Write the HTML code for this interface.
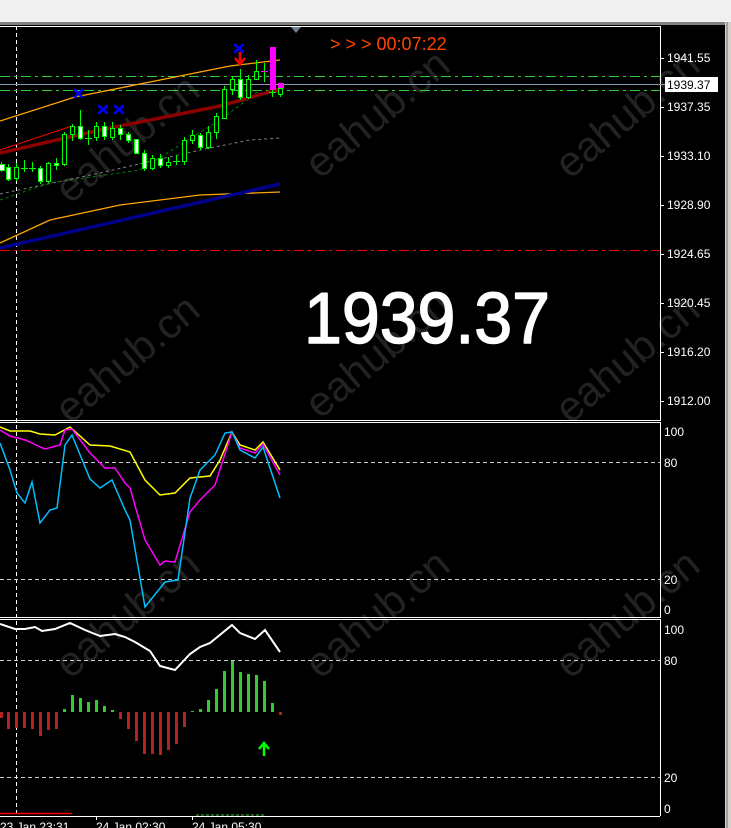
<!DOCTYPE html>
<html><head><meta charset="utf-8"><style>
html,body{margin:0;padding:0;background:#000;}
svg{display:block;}
text{font-family:"Liberation Sans",sans-serif;}
</style></head><body>
<svg width="731" height="828" viewBox="0 0 731 828" xmlns="http://www.w3.org/2000/svg">
<rect width="731" height="828" fill="#000"/>
<rect x="0" y="0" width="731" height="22" fill="#f0f0f0"/>
<rect x="0" y="22" width="731" height="3" fill="#808080"/>
<line x1="0" y1="26.5" x2="660" y2="26.5" stroke="#fff"/>
<polygon points="291,27 301,27 296,33" fill="#708090"/>
<rect x="725" y="22" width="6" height="806" fill="#d4d0c8"/>
<rect x="726" y="22" width="2" height="806" fill="#a0a0a0"/>
<g fill="#222" font-size="42" font-family="Liberation Sans,sans-serif">
<text transform="translate(70,205) rotate(-40)">eahub.cn</text>
<text transform="translate(320,180) rotate(-40)">eahub.cn</text>
<text transform="translate(570,180) rotate(-40)">eahub.cn</text>
<text transform="translate(70,425) rotate(-40)">eahub.cn</text>
<text transform="translate(320,420) rotate(-40)">eahub.cn</text>
<text transform="translate(570,425) rotate(-40)">eahub.cn</text>
<text transform="translate(70,680) rotate(-40)">eahub.cn</text>
<text transform="translate(320,680) rotate(-40)">eahub.cn</text>
<text transform="translate(570,680) rotate(-40)">eahub.cn</text>
</g>
<line x1="660.5" y1="26" x2="660.5" y2="421" stroke="#fff"/>
<line x1="16.5" y1="26" x2="16.5" y2="815" stroke="#fff" stroke-dasharray="4,3"/>
<line x1="0" y1="76.5" x2="660" y2="76.5" stroke="#32cd32" stroke-dasharray="10,4,3,4"/>
<line x1="0" y1="90.5" x2="660" y2="90.5" stroke="#32cd32" stroke-dasharray="10,4,3,4"/>
<line x1="0" y1="84.5" x2="665" y2="84.5" stroke="#8899aa"/>
<line x1="0" y1="250.5" x2="660" y2="250.5" stroke="#ff0000" stroke-dasharray="10,4,3,4"/>
<polyline points="0,121 75,97 150,82 230,66 280,60" fill="none" stroke="#ffa500" stroke-width="1.3"/>
<polyline points="0,194 100,173 200,150 250,140 280,138" fill="none" stroke="#808080" stroke-dasharray="3,3"/>
<polyline points="0,200 50,183 140,170 220,120 260,90" fill="none" stroke="#008000" stroke-dasharray="3,3"/>
<polyline points="0,150 72,126" fill="none" stroke="#ff0000"/>
<polyline points="0,153 100,130 220,106 280,89" fill="none" stroke="#8b0000" stroke-width="3.5"/>
<polyline points="0,243 50,220 120,205 200,195 280,192" fill="none" stroke="#ffa500" stroke-width="1.3"/>
<polyline points="0,248 280,184" fill="none" stroke="#00008b" stroke-width="3.5"/>
<g stroke="#00ff00" stroke-width="1">
<line x1="1.5" y1="162" x2="1.5" y2="172"/><rect x="-1.5" y="164.5" width="6" height="6" fill="#fff"/>
<line x1="8.5" y1="164" x2="8.5" y2="181"/><rect x="6.5" y="167.5" width="4" height="12" fill="#fff"/>
<line x1="16.5" y1="163" x2="16.5" y2="181"/><rect x="14.5" y="167.5" width="4" height="11" fill="#000"/>
<line x1="24.5" y1="160" x2="24.5" y2="172"/><line x1="21" y1="168.5" x2="28" y2="168.5"/>
<line x1="32.5" y1="162" x2="32.5" y2="172"/><line x1="29" y1="168.5" x2="36" y2="168.5"/>
<line x1="40.5" y1="166" x2="40.5" y2="184"/><rect x="38.5" y="168.5" width="4" height="13" fill="#fff"/>
<line x1="48.5" y1="162" x2="48.5" y2="183"/><rect x="46.5" y="163.5" width="4" height="18" fill="#000"/>
<line x1="56.5" y1="158" x2="56.5" y2="170"/><rect x="54.5" y="163.5" width="4" height="2" fill="#fff"/>
<line x1="64.5" y1="132" x2="64.5" y2="166"/><rect x="62.5" y="134.5" width="4" height="30" fill="#000"/>
<line x1="72.5" y1="124" x2="72.5" y2="141"/><rect x="70.5" y="126.5" width="4" height="8" fill="#000"/>
<line x1="80.5" y1="110" x2="80.5" y2="140"/><rect x="78.5" y="126.5" width="4" height="12" fill="#fff"/>
<line x1="88.5" y1="130" x2="88.5" y2="145"/><line x1="85" y1="138.5" x2="92" y2="138.5"/>
<line x1="96.5" y1="122" x2="96.5" y2="141"/><rect x="94.5" y="126.5" width="4" height="11" fill="#000"/>
<line x1="104.5" y1="122" x2="104.5" y2="140"/><rect x="102.5" y="126.5" width="4" height="10" fill="#fff"/>
<line x1="112.5" y1="122" x2="112.5" y2="140"/><rect x="110.5" y="128.5" width="4" height="9" fill="#000"/>
<line x1="120.5" y1="125" x2="120.5" y2="140"/><rect x="118.5" y="128.5" width="4" height="6" fill="#fff"/>
<line x1="128.5" y1="132" x2="128.5" y2="143"/><rect x="126.5" y="134.5" width="4" height="6" fill="#fff"/>
<line x1="136.5" y1="139" x2="136.5" y2="154"/><rect x="134.5" y="139.5" width="4" height="14" fill="#fff"/>
<line x1="144.5" y1="150" x2="144.5" y2="171"/><rect x="142.5" y="153.5" width="4" height="15" fill="#fff"/>
<line x1="152.5" y1="155" x2="152.5" y2="170"/><rect x="150.5" y="158.5" width="4" height="10" fill="#000"/>
<line x1="160.5" y1="154" x2="160.5" y2="168"/><rect x="158.5" y="158.5" width="4" height="7" fill="#fff"/>
<line x1="168.5" y1="157" x2="168.5" y2="168"/><rect x="166.5" y="162.5" width="4" height="3" fill="#000"/>
<line x1="176.5" y1="155" x2="176.5" y2="165"/><line x1="173" y1="161.5" x2="180" y2="161.5"/>
<line x1="184.5" y1="137" x2="184.5" y2="165"/><rect x="182.5" y="140.5" width="4" height="21" fill="#000"/>
<line x1="192.5" y1="130" x2="192.5" y2="144"/><rect x="190.5" y="135.5" width="4" height="5" fill="#000"/>
<line x1="200.5" y1="133" x2="200.5" y2="150"/><rect x="198.5" y="135.5" width="4" height="12" fill="#fff"/>
<line x1="208.5" y1="126" x2="208.5" y2="149"/><rect x="206.5" y="132.5" width="4" height="15" fill="#000"/>
<line x1="216.5" y1="113" x2="216.5" y2="139"/><rect x="214.5" y="116.5" width="4" height="16" fill="#000"/>
<line x1="224.5" y1="86" x2="224.5" y2="118"/><rect x="222.5" y="89.5" width="4" height="29" fill="#000"/>
<line x1="232.5" y1="76" x2="232.5" y2="95"/><rect x="230.5" y="79.5" width="4" height="10" fill="#000"/>
<line x1="240.5" y1="69" x2="240.5" y2="100"/><rect x="238.5" y="79.5" width="4" height="18" fill="#fff"/>
<line x1="248.5" y1="75" x2="248.5" y2="99"/><rect x="246.5" y="79.5" width="4" height="18" fill="#000"/>
<line x1="256.5" y1="60" x2="256.5" y2="80"/><rect x="254.5" y="71.5" width="4" height="8" fill="#000"/>
<line x1="264.5" y1="63" x2="264.5" y2="82"/>
<line x1="272.5" y1="88" x2="272.5" y2="97"/><line x1="269" y1="92.5" x2="276" y2="92.5"/>
<line x1="280.5" y1="86" x2="280.5" y2="97"/><rect x="278.5" y="88.5" width="4" height="6" fill="#000"/>
</g>
<line x1="261" y1="71.5" x2="268" y2="71.5" stroke="#ff00ff"/>
<rect x="270" y="47" width="6" height="43" fill="#ff00ff"/>
<rect x="278" y="83" width="6" height="5" fill="#ff00ff"/>
<g stroke="#0000ff" stroke-width="2.5" stroke-linecap="round">
<path d="M75,90 l7,7 M82,90 l-7,7"/>
<path d="M99,106 l8,7 M107,106 l-8,7"/>
<path d="M115,106 l8,7 M123,106 l-8,7"/>
<path d="M235,45 l8,7 M243,45 l-8,7"/>
</g>
<path d="M240,52 v10 M235,58 l5,6 l5,-6" stroke="#ff0000" stroke-width="2.5" fill="none"/>
<text x="330" y="50" font-size="18" fill="#ff4500">&gt; &gt; &gt; 00:07:22</text>
<text x="304" y="343" font-size="72" fill="#fff" stroke="#fff" stroke-width="1.5" stroke-linejoin="round" textLength="246" lengthAdjust="spacingAndGlyphs">1939.37</text>
<g fill="#fff" font-size="12">
<text x="667" y="62">1941.55</text>
<text x="667" y="111">1937.35</text>
<text x="667" y="160">1933.10</text>
<text x="667" y="209">1928.90</text>
<text x="667" y="258">1924.65</text>
<text x="667" y="307">1920.45</text>
<text x="667" y="356">1916.20</text>
<text x="667" y="405">1912.00</text>
</g>
<g stroke="#fff"><line x1="660" y1="58.5" x2="664" y2="58.5"/><line x1="660" y1="107.5" x2="664" y2="107.5"/><line x1="660" y1="156.5" x2="664" y2="156.5"/><line x1="660" y1="205.5" x2="664" y2="205.5"/><line x1="660" y1="254.5" x2="664" y2="254.5"/><line x1="660" y1="303.5" x2="664" y2="303.5"/><line x1="660" y1="352.5" x2="664" y2="352.5"/><line x1="660" y1="401.5" x2="664" y2="401.5"/></g>
<rect x="665" y="77" width="53" height="15" fill="#fff"/>
<text x="667" y="89" font-size="12" fill="#000">1939.37</text>
<line x1="0" y1="420.5" x2="660" y2="420.5" stroke="#fff"/>
<line x1="0" y1="422.5" x2="660" y2="422.5" stroke="#fff"/>
<line x1="660.5" y1="422" x2="660.5" y2="618" stroke="#fff"/>
<line x1="0" y1="617.5" x2="660" y2="617.5" stroke="#fff"/>
<line x1="0" y1="619.5" x2="660" y2="619.5" stroke="#fff"/>
<line x1="660.5" y1="619" x2="660.5" y2="816" stroke="#fff"/>
<line x1="0" y1="462.5" x2="660" y2="462.5" stroke="#ccc" stroke-dasharray="4,3"/>
<line x1="0" y1="579.5" x2="660" y2="579.5" stroke="#ccc" stroke-dasharray="4,3"/>
<polyline fill="none" stroke="#ffff00" stroke-width="1.5" points="0,427 10,431 30,431 40,434 55,435 70,427 90,445 110,446 130,452 145,480 160,495 175,493 190,478 200,477 210,476 220,460 232,432 240,445 255,450 263,442 280,470"/>
<polyline fill="none" stroke="#ff00ff" stroke-width="1.5" points="0,430 10,436 25,440 30,442 40,447 45,449 60,445 65,430 72,429 90,453 105,468 115,468 125,483 130,488 145,540 160,565 165,561 175,562 190,512 200,500 215,485 232,432 240,448 255,453 263,444 280,475"/>
<polyline fill="none" stroke="#00bfff" stroke-width="1.5" points="0,443 10,470 17,493 25,503 32,482 40,523 50,510 57,508 65,445 72,435 90,479 100,488 112,480 125,510 130,520 145,607 165,582 178,580 190,498 200,470 215,455 225,433 232,432 240,450 255,458 263,447 280,498"/>
<g fill="#fff" font-size="12">
<text x="664" y="436">100</text><text x="664" y="467">80</text><text x="664" y="584">20</text><text x="664" y="614">0</text>
<text x="664" y="634">100</text><text x="664" y="665">80</text><text x="664" y="782">20</text><text x="664" y="813">0</text>
</g>
<line x1="0" y1="660.5" x2="660" y2="660.5" stroke="#ccc" stroke-dasharray="4,3"/>
<line x1="0" y1="777.5" x2="660" y2="777.5" stroke="#ccc" stroke-dasharray="4,3"/>
<polyline fill="none" stroke="#fff" stroke-width="2" points="0,624 15,629 25,629 35,627 42,631 55,629 70,623 85,630 100,636 115,634 125,637 135,642 150,651 160,666 175,670 190,654 200,647 210,643 232,625 240,633 255,639 265,630 280,652"/>
<g fill="#b22222">
<rect x="0" y="712" width="3" height="6"/><rect x="7" y="712" width="3" height="17"/><rect x="15" y="712" width="3" height="16"/><rect x="23" y="712" width="3" height="16"/><rect x="31" y="712" width="3" height="17"/><rect x="39" y="712" width="3" height="24"/><rect x="47" y="712" width="3" height="18"/><rect x="55" y="712" width="3" height="17"/>
<rect x="119" y="712" width="3" height="7"/><rect x="127" y="712" width="3" height="17"/><rect x="135" y="712" width="3" height="29"/><rect x="143" y="712" width="3" height="42"/><rect x="151" y="712" width="3" height="42"/><rect x="159" y="712" width="3" height="43"/><rect x="167" y="712" width="3" height="38"/><rect x="175" y="712" width="3" height="32"/><rect x="183" y="712" width="3" height="15"/>
<rect x="279" y="712" width="3" height="3"/>
</g>
<g fill="#32cd32">
<rect x="63" y="709" width="3" height="3"/><rect x="71" y="695" width="3" height="17"/><rect x="79" y="698" width="3" height="14"/><rect x="87" y="702" width="3" height="10"/><rect x="95" y="700" width="3" height="12"/><rect x="103" y="706" width="3" height="6"/><rect x="111" y="710" width="3" height="2"/>
<rect x="191" y="711" width="3" height="1"/><rect x="199" y="709" width="3" height="3"/><rect x="207" y="700" width="3" height="12"/><rect x="215" y="689" width="3" height="23"/><rect x="223" y="671" width="3" height="41"/><rect x="231" y="661" width="3" height="51"/><rect x="239" y="672" width="3" height="40"/><rect x="247" y="674" width="3" height="38"/><rect x="255" y="675" width="3" height="37"/><rect x="263" y="681" width="3" height="31"/><rect x="271" y="703" width="3" height="9"/>
</g>
<path d="M264,756 v-12 M259,749 l5,-6 l5,6" stroke="#00ff00" stroke-width="2.5" fill="none"/>
<line x1="0" y1="813.5" x2="72" y2="813.5" stroke="#ff0000" stroke-width="1.5"/>
<line x1="196" y1="815" x2="265" y2="815" stroke="#32cd32" stroke-dasharray="3,2"/>
<line x1="0" y1="816.5" x2="660" y2="816.5" stroke="#fff"/>
<line x1="96.5" y1="816" x2="96.5" y2="820" stroke="#fff"/>
<line x1="192.5" y1="816" x2="192.5" y2="820" stroke="#fff"/>
<g fill="#fff" font-size="12">
<text x="0" y="831">23 Jan 23:31</text>
<text x="96" y="831">24 Jan 02:30</text>
<text x="192" y="831">24 Jan 05:30</text>
</g>
</svg>
</body></html>
